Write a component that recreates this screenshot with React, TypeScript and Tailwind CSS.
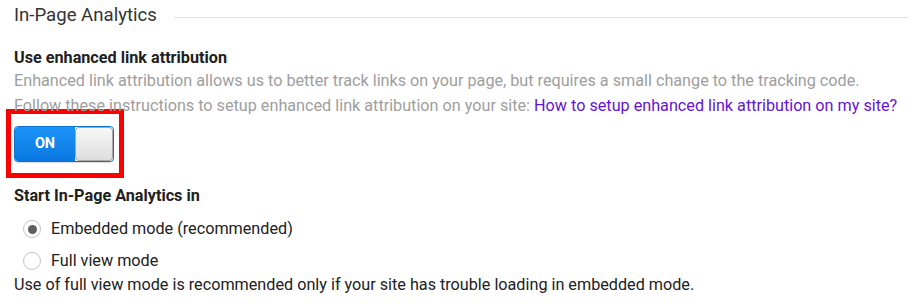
export default function App() {
  return (
    <div className="w-[916px] h-[308px] bg-white pl-[14px] pr-[8px] pt-[3px] font-['Roboto',sans-serif] text-[#212121]">
      <div className="flex items-center h-[26px]">
        <h2 className="text-[18.6px] text-[#333]">In-Page Analytics</h2>
        <div className="flex-1 h-px bg-[#e0e0e0] ml-[17px] mt-[2px]" />
      </div>

      <div className="mt-[19px] text-[16.2px] font-bold leading-[20px] text-[#212121]">Use enhanced link attribution</div>
      <p className="text-[16.2px] leading-[25px] text-[#9e9e9e]">
        Enhanced link attribution allows us to better track links on your page, but requires a small change to the tracking code.
      </p>
      <p className="text-[16.2px] leading-[25px] text-[#9e9e9e]">
        Follow these instructions to setup enhanced link attribution on your site:{" "}
        <a className="text-[#6314d4]">How to setup enhanced link attribution on my site?</a>
      </p>

      <div className="ml-[-8px] mt-[-9px] w-[118px] border-[5px] border-[#ff0000] px-[3px] pt-[12px] pb-[11px]">
        <div className="flex h-[36px] w-[100px] rounded-[4px] overflow-hidden border border-[#0a72d1] shadow-[0_1px_1px_rgba(0,0,0,0.15)]">
          <div className="flex w-[60px] items-center justify-center bg-gradient-to-b from-[#1c93f7] to-[#0878e0] text-[14.5px] font-bold text-white">ON</div>
          <div className="flex-1 rounded-[4px] border border-[#a8a8a8] bg-gradient-to-b from-[#f7f7f7] to-[#dedede]" />
        </div>
      </div>

      <div className="mt-[8px] text-[16.2px] font-bold leading-[20px]">Start In-Page Analytics in</div>

      <div className="mt-[11px] flex flex-col gap-[8px] pl-[9px]">
        <label className="flex items-center gap-[10px] text-[16.2px] leading-[24px]">
          <span className="flex h-[18px] w-[18px] items-center justify-center rounded-full border border-[#c4c4c4] bg-white">
            <span className="h-[9px] w-[9px] rounded-full bg-[#5f5f5f]" />
          </span>
          Embedded mode (recommended)
        </label>
        <label className="flex items-center gap-[10px] text-[16.2px] leading-[24px]">
          <span className="h-[18px] w-[18px] rounded-full border border-[#c4c4c4] bg-white" />
          Full view mode
        </label>
      </div>
      <p className="text-[16.2px] leading-[24px]">
        Use of full view mode is recommended only if your site has trouble loading in embedded mode.
      </p>
    </div>
  );
}
